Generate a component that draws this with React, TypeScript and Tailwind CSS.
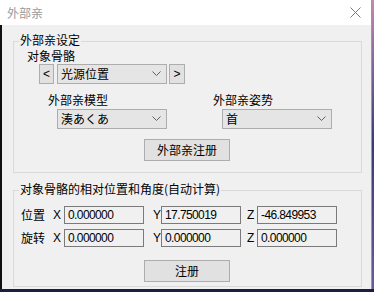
const cjk = { fontFamily: '"Noto Sans CJK SC", "Noto Sans CJK JP", sans-serif' }
const num = { fontFamily: '"Liberation Sans", Arial, sans-serif' }

function Chevron() {
  return (
    <svg width="9" height="6" viewBox="0 0 9 6" className="shrink-0">
      <path d="M0.5 0.5 L4.5 4.5 L8.5 0.5" fill="none" stroke="#606060" strokeWidth="1" />
    </svg>
  )
}

function Combo({ value, className = '' }: { value: string; className?: string }) {
  return (
    <div
      className={`flex h-[20px] w-[110px] items-center justify-between border border-[#adadad] bg-[#e5e5e5] pl-[3px] pr-[5px] text-[12px] text-black ${className}`}
    >
      <span className="leading-[14px]">{value}</span>
      <Chevron />
    </div>
  )
}

function Field({ value }: { value: string }) {
  return (
    <div
      className="flex h-[18px] w-[80px] items-center border border-[#7a7a7a] bg-[#f0f0f0] pl-[3px] text-[12px] leading-[14px] tracking-[-0.6px] text-black"
      style={num}
    >
      {value}
    </div>
  )
}

function Btn({ label, className = '' }: { label: string; className?: string }) {
  return (
    <div
      className={`flex h-[22px] w-[86px] items-center justify-center border border-[#adadad] bg-[#e1e1e1] text-[12px] leading-[14px] text-black ${className}`}
    >
      {label}
    </div>
  )
}

function Group({ title, className = '', children }: { title: string; className?: string; children: React.ReactNode }) {
  return (
    <div className={`relative w-[349px] border border-[#d9d9d9] ${className}`}>
      <span className="absolute left-[5px] top-[-8px] bg-[#f0f0f0] px-[1px] text-[12px] leading-[12px] text-black">
        {title}
      </span>
      {children}
    </div>
  )
}

export default function App() {
  return (
    <div className="flex h-[292px] w-[374px] bg-[#1d1d3f]" style={cjk}>
      <div className="flex h-[289px] w-[372px] flex-col border-r border-[#9a9a9a]">
        <div className="flex h-[25px] items-center justify-between bg-white pl-[7px] pr-[10px]">
          <span className="text-[12px] leading-[14px] text-[#9a9a9a]">外部亲</span>
          <svg width="11" height="11" viewBox="0 0 11 11">
            <path d="M0.5 0.5 L10.5 10.5 M10.5 0.5 L0.5 10.5" stroke="#7a7a7a" strokeWidth="1" />
          </svg>
        </div>
        <div className="flex flex-1 flex-col border-l-2 border-[#111] bg-[#f0f0f0] pl-[11px]">
          <Group title="外部亲设定" className="mt-[16px] h-[132px]">
            <div className="flex flex-col pt-[8px]">
              <span className="pl-[13px] text-[12px] leading-[12px] text-black">对象骨骼</span>
              <div className="mt-[2px] flex pl-[25px]">
                <div className="flex h-[20px] w-[15px] items-center justify-center border border-[#adadad] bg-[#e1e1e1] text-[12px] leading-[12px]" style={num}>
                  &lt;
                </div>
                <Combo value="光源位置" className="ml-[3px]" />
                <div className="ml-[2px] flex h-[20px] w-[16px] items-center justify-center border border-[#adadad] bg-[#e1e1e1] text-[12px] leading-[12px]" style={num}>
                  &gt;
                </div>
              </div>
              <div className="mt-[9px] flex">
                <div className="flex w-[165px] flex-col pl-[34px]">
                  <span className="text-[12px] leading-[14px] text-black">外部亲模型</span>
                  <Combo value="湊あくあ" className="ml-[9px] mt-[2px]" />
                </div>
                <div className="flex flex-col pl-[34px]">
                  <span className="text-[12px] leading-[14px] text-black">外部亲姿势</span>
                  <Combo value="首" className="ml-[9px] mt-[2px]" />
                </div>
              </div>
              <Btn label="外部亲注册" className="ml-[130px] mt-[10px]" />
            </div>
          </Group>
          <Group title="对象骨骼的相对位置和角度(自动计算)" className="mt-[17px] h-[97px]">
            <div className="flex flex-col pl-[7px] pt-[15px]">
              {[
                ['位置', '0.000000', '17.750019', '-46.849953'],
                ['旋转', '0.000000', '0.000000', '0.000000'],
              ].map((r, i) => (
                <div key={r[0]} className={`flex items-center ${i ? 'mt-[5px]' : ''}`}>
                  <span className="w-[32px] text-[12px] leading-[14px] text-black">{r[0]}</span>
                  <span className="w-[11px] text-[12px] leading-[14px] text-black" style={num}>X</span>
                  <Field value={r[1]} />
                  <span className="w-[17px] pl-[9px] text-[12px] leading-[14px] text-black" style={num}>Y</span>
                  <Field value={r[2]} />
                  <span className="w-[16px] pl-[6px] text-[12px] leading-[14px] text-black" style={num}>Z</span>
                  <Field value={r[3]} />
                </div>
              ))}
              <Btn label="注册" className="ml-[123px] mt-[13px]" />
            </div>
          </Group>
        </div>
      </div>
      <div className="h-[289px] flex-1 bg-gradient-to-b from-[#c48ab0] via-[#3a3a7a] to-[#6a5aa0]" />
    </div>
  )
}
